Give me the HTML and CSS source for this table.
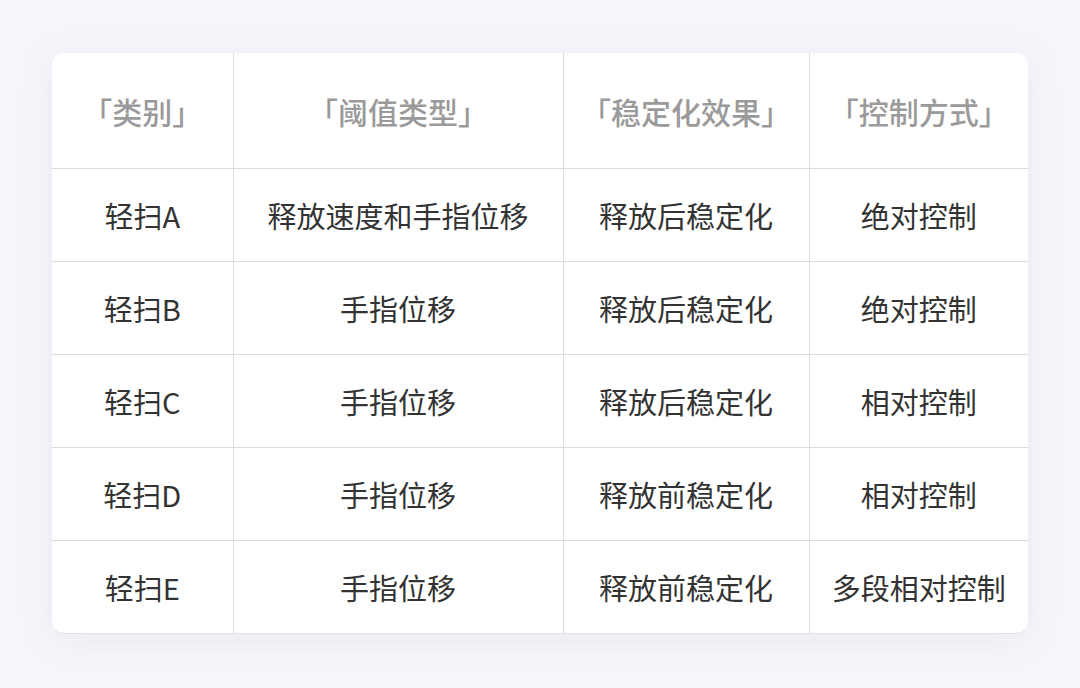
FILE: index.html
```html
<!DOCTYPE html>
<html lang="zh">
<head>
<meta charset="utf-8">
<link rel="stylesheet" href="styles.css">
</head>
<body>
<div class="page">
  <div class="card">
    <table class="grid">
      <colgroup>
        <col class="c1"><col class="c2"><col class="c3"><col class="c4">
      </colgroup>
      <thead>
        <tr><th>「类别」</th><th>「阈值类型」</th><th>「稳定化效果」</th><th>「控制方式」</th></tr>
      </thead>
      <tbody>
        <tr><td>轻扫A</td><td>释放速度和手指位移</td><td>释放后稳定化</td><td>绝对控制</td></tr>
        <tr><td>轻扫B</td><td>手指位移</td><td>释放后稳定化</td><td>绝对控制</td></tr>
        <tr><td>轻扫C</td><td>手指位移</td><td>释放后稳定化</td><td>相对控制</td></tr>
        <tr><td>轻扫D</td><td>手指位移</td><td>释放前稳定化</td><td>相对控制</td></tr>
        <tr><td>轻扫E</td><td>手指位移</td><td>释放前稳定化</td><td>多段相对控制</td></tr>
      </tbody>
    </table>
  </div>
</div>
</body>
</html>
```
FILE: styles.css
```css
html, body {
  margin: 0;
  padding: 0;
  background: #f5f6fa;
}
.page {
  width: 1080px;
  height: 688px;
  box-sizing: border-box;
  padding: 53px 52px 0 52px;
  font-family: "Noto Sans CJK SC", "Noto Sans", sans-serif;
}
.card {
  width: 976px;
  background: #ffffff;
  border-radius: 12px;
  overflow: hidden;
  box-shadow: 0 6px 30px rgba(180, 186, 210, 0.18);
  border-bottom: 1px solid #e2e2e6;
}
.grid {
  width: 100%;
  border-collapse: collapse;
  table-layout: fixed;
}
.c1 { width: 181px; }
.c2 { width: 330px; }
.c3 { width: 246px; }
.c4 { width: 219px; }
.grid th, .grid td {
  text-align: center;
  vertical-align: middle;
  padding: 0;
  border-left: 1px solid #dcdcdc;
  border-top: 1px solid #dcdcdc;
  font-size: 29px;
  line-height: 1;
}
.grid th:first-child, .grid td:first-child {
  border-left: none;
}
.grid thead th {
  border-top: none;
  height: 115px;
  color: #9a9a9a;
  font-weight: 500;
  font-size: 30px;
}
.grid tbody td {
  height: 92px;
  color: #333333;
  font-weight: 400;
}
```
